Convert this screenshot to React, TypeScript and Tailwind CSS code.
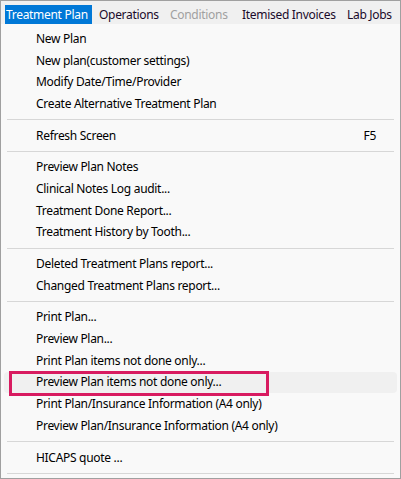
import React from "react";

type Item = { label: string; shortcut?: string; hover?: boolean } | "sep";

const ITEMS: Item[] = [
  { label: "New Plan" },
  { label: "New plan(customer settings)" },
  { label: "Modify Date/Time/Provider" },
  { label: "Create Alternative Treatment Plan" },
  "sep",
  { label: "Refresh Screen", shortcut: "F5" },
  "sep",
  { label: "Preview Plan Notes" },
  { label: "Clinical Notes Log audit..." },
  { label: "Treatment Done Report..." },
  { label: "Treatment History by Tooth..." },
  "sep",
  { label: "Deleted Treatment Plans report..." },
  { label: "Changed Treatment Plans report..." },
  "sep",
  { label: "Print Plan..." },
  { label: "Preview Plan..." },
  { label: "Print Plan items not done only..." },
  { label: "Preview Plan items not done only...", hover: true },
  { label: "Print Plan/Insurance Information (A4 only)" },
  { label: "Preview Plan/Insurance Information (A4 only)" },
  "sep",
  { label: "HICAPS quote ..." },
  "sep",
];

export default function App() {
  return (
    <div
      className="w-[401px] h-[479px] border border-[#a0a0a0] bg-[#f9f9f9] flex flex-col overflow-hidden text-[12px] tracking-[-0.3px] text-black"
      style={{ fontFamily: '"Noto Sans", "Open Sans", sans-serif' }}
    >
      <div className="h-[23px] shrink-0 bg-[#f0f0f0] flex items-end pl-[4px] whitespace-nowrap">
        <div className="w-[87px] h-[19px] pl-[1px] flex items-center bg-[#0078d7] text-white">Treatment Plan</div>
        <div className="w-[71px] h-[19px] pl-[7px] flex items-center text-[#1a0a2a]">Operations</div>
        <div className="w-[72px] h-[19px] pl-[7px] flex items-center text-[#a0a0a0]">Conditions</div>
        <div className="w-[105px] h-[19px] pl-[7px] flex items-center text-[#1a0a2a]">Itemised Invoices</div>
        <div className="w-[55px] h-[19px] pl-[7px] flex items-center text-[#1a0a2a]">Lab Jobs</div>
      </div>
      <div className="flex flex-col px-[3px] pt-[4px]">
        {ITEMS.map((it, i) =>
          it === "sep" ? (
            <div key={i} className="h-[10px] shrink-0 flex items-center px-[3px]">
              <div className="h-px w-full bg-[#d7d7d7]" />
            </div>
          ) : (
            <div
              key={i}
              className={`relative h-[21.7px] shrink-0 flex items-center pl-[32px] pr-[21px] rounded-[4px] whitespace-nowrap ${
                it.hover ? "bg-[#f0f0f0]" : ""
              }`}
            >
              <span className="flex-1">{it.label}</span>
              {it.shortcut && <span>{it.shortcut}</span>}
              {it.hover && (
                <div className="absolute left-[5px] top-[-1px] w-[260px] h-[25px] border-[3px] border-[#d81b60]" />
              )}
            </div>
          )
        )}
      </div>
    </div>
  );
}
